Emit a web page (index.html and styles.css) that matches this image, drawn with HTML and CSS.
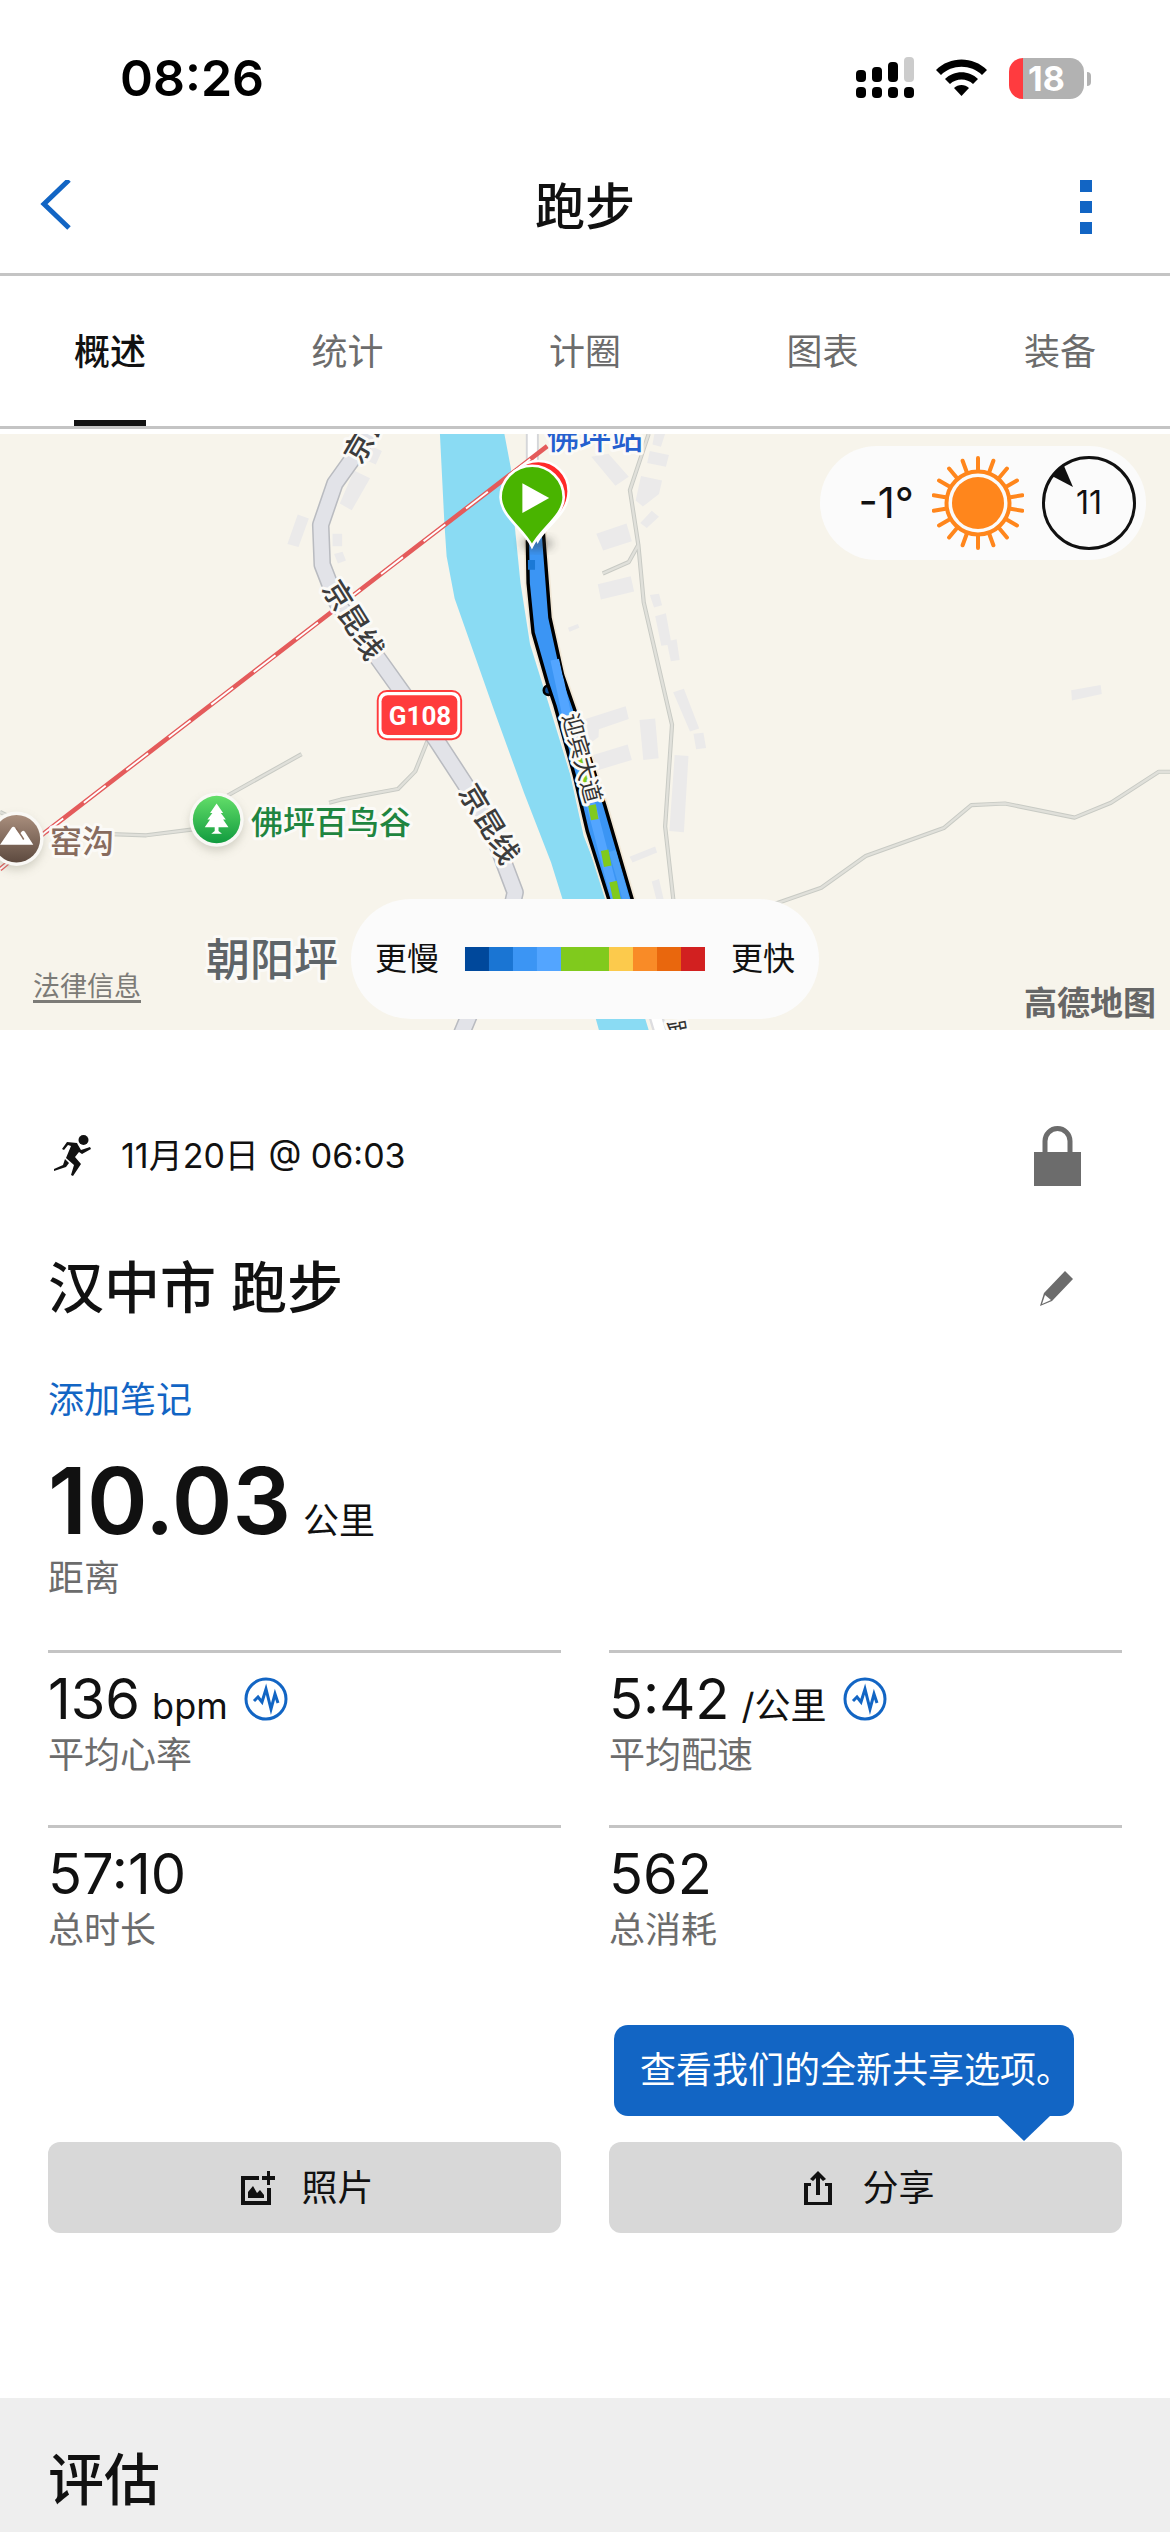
FILE: index.html
```html
<!DOCTYPE html>
<html lang="zh-CN">
<head>
<meta charset="utf-8">
<meta name="viewport" content="width=device-width, initial-scale=1">
<title>跑步</title>
<link rel="stylesheet" href="styles.css">
</head>
<body>
<div class="status">
  <time class="clock">08:26</time>
  <div class="status-icons">
    <svg width="58" height="42" viewBox="0 0 58 42" aria-label="信号">
      <rect x="0" y="13" width="10" height="12" rx="4"/><rect x="16" y="10" width="10" height="15" rx="4"/><rect x="32" y="5" width="10" height="20" rx="4"/><rect x="48" y="0" width="10" height="25" rx="4" fill="#ccc"/>
      <rect x="0" y="30" width="10" height="11" rx="4"/><rect x="16" y="30" width="10" height="11" rx="4"/><rect x="32" y="30" width="10" height="11" rx="4"/><rect x="48" y="30" width="10" height="11" rx="4"/>
    </svg>
    <svg width="51" height="42" viewBox="0 0 51 42" aria-label="无线网络">
      <path d="M0 13C14-1 37-1 51 13L46 18C35 7 16 7 5 18ZM9 22C18 13 33 13 42 22L37 27C31 21 20 21 14 27ZM18 31C22 27 29 27 33 31L25.500 39Z"/>
    </svg>
    <div class="battery"><span class="battery-level">18</span><i class="battery-nub"></i></div>
  </div>
</div>
<header class="nav">
  <button class="icon-button" aria-label="返回"><svg width="32" height="54" viewBox="0 0 32 54" fill="none" stroke="#1265c4" stroke-width="5"><path d="M29 0L4 24L29 48"/></svg></button>
  <h1 class="nav-title">跑步</h1>
  <button class="icon-button nav-more" aria-label="更多"><svg width="12" height="54" viewBox="0 0 12 54" fill="#1265c4"><path d="M0 0h12v12H0zM0 21h12v12H0zM0 42h12v12H0z"/></svg></button>
</header>
<nav class="tabs">
  <a class="tab tab-active" href="#overview">概述</a>
  <a class="tab" href="#stats">统计</a>
  <a class="tab" href="#laps">计圈</a>
  <a class="tab" href="#charts">图表</a>
  <a class="tab" href="#gear">装备</a>
</nav>
<section class="map">
  <svg class="map-canvas" viewBox="0 0 1170 596" preserveAspectRatio="xMidYMid slice">
    <defs>
      <linearGradient id="park" x1="0" y1="0" x2="0" y2="1"><stop offset="0" stop-color="#63de69"/><stop offset="1" stop-color="#119b3f"/></linearGradient>
      <linearGradient id="peak" x1="0" y1="0" x2="0" y2="1"><stop offset="0" stop-color="#a98e7d"/><stop offset="1" stop-color="#5d4a3f"/></linearGradient>
      <filter id="soft" x="-50%" y="-50%" width="200%" height="200%"><feGaussianBlur stdDeviation="12"/></filter>
      <clipPath id="route-clip"><path id="route-shape" d="M1378 290L1380 400L1393 530L1430 660L1450 720L1500 900L1535 1050L1595 1240L1656 1240L1580 980L1505 740L1470 640L1437 490L1430 400L1420 270Z"/></clipPath>
    </defs>
    <rect width="1170" height="596" fill="#f7f4eb"/>
    <g transform="translate(0 -4) scale(.3827)">
      <path fill="#8adbf3" d="M1149 0H1316L1335 100L1345 250L1360 400L1385 560L1435 720L1490 900L1525 1060L1590 1226L1695 1568H1565L1470 1226L1440 1130L1370 950L1290 730L1188 440L1167 330L1161 240Z"/>
      <g fill="#ebeaea">
        <path d="M925 106L967 126L919 210L888 192ZM778 221L807 231L780 306L751 298ZM869 271H894V304H869ZM873 324L895 318L904 341L883 349ZM970 42L998 55L982 90L958 80ZM1484 517L1510 507L1514 517L1488 527Z"/>
        <path transform="translate(1490 0)" d="M55 70L100 62L153 122L118 146ZM208 55L258 65L250 96L201 86ZM220 10H248L237 44L215 38ZM185 120L240 132L232 167L190 200L171 184ZM213 211L232 227L200 256L183 243ZM68 271L147 244L161 291L86 315ZM72 403L158 382L167 422L80 443ZM208 431L232 428L240 458L219 464ZM222 487L250 479L263 550L278 547L286 601L263 604L254 562L238 564ZM269 685L297 676L337 780L313 788ZM322 794L348 791L355 831L329 834ZM40 755L145 722L153 755L75 782L74 802L50 820ZM181 758L222 754L231 858L191 862ZM60 849L150 822L161 862L70 890ZM273 849L309 852L297 1051L259 1048ZM155 1115L222 1088L227 1104L163 1130ZM213 1180L232 1173L244 1226H225ZM1309 680L1386 666L1389 690L1311 707Z"/>
      </g>
      <path fill="none" stroke="#c8cac4" stroke-width="11" stroke-linejoin="round" d="M0 998L40 1018M290 1056L382 1059L510 1043M595 955L788 847M860 974L890 966L1040 938L1085 892L1118 810M1695 10L1646 157L1668 300L1682 450L1756 770L1738 1036L1762 1250M1668 300L1643 345L1575 375M2020 1240L2146 1196L2262 1113L2466 1040L2538 980L2626 976L2808 1013L2903 974L3028 893H3070"/>
      <path d="M0 998L40 1018M290 1056L382 1059L510 1043M595 955L788 847M860 974L890 966L1040 938L1085 892L1118 810M1695 10L1646 157L1668 300L1682 450L1756 770L1738 1036L1762 1250M1668 300L1643 345L1575 375M2020 1240L2146 1196L2262 1113L2466 1040L2538 980L2626 976L2808 1013L2903 974L3028 893H3070" fill="none" stroke="#e0e0da" stroke-width="6"/>
      <g fill="none" stroke-linejoin="round">
        <path stroke="#b9bbc0" stroke-width="46" d="M975 0L875 140L838 248L842 352L880 450L990 600L1140 810L1215 925L1290 1060L1346 1208L1330 1280L1205 1580"/>
        <path stroke="#e2e3e8" stroke-width="38" d="M975 0L875 140L838 248L842 352L880 450L990 600L1140 810L1215 925L1290 1060L1346 1208L1330 1280L1205 1580"/>
        <path stroke="#d5d6d9" stroke-width="34" d="M1391 0V110"/><path stroke="#fff" stroke-width="24" d="M1391 0V110"/>
        <path stroke="#dddde0" stroke-width="38" d="M1710 1520L1728 1580"/><path stroke="#fff" stroke-width="26" d="M1710 1520L1728 1580"/>
        <path stroke="#e45b5b" stroke-width="12" d="M0 1148L120 1050L1430 42"/>
        <path stroke="#fff" stroke-width="5" stroke-dasharray="72 68" d="M0 1148L120 1050L1430 42"/>
      </g>
      <use href="#route-shape" fill="none" stroke="#f1e7d6" stroke-width="18"/>
      <circle cx="1433" cy="680" r="12" fill="#0c4b94" stroke="#000" stroke-width="7"/>
      <use href="#route-shape" fill="#3b95f4" stroke="#000" stroke-width="9" stroke-linejoin="round"/>
      <g clip-path="url(#route-clip)" fill="none">
        <path stroke="#53a5ff" stroke-width="24" d="M1450 600L1480 740L1550 1000L1612 1240"/>
        <path stroke="#4ca1f8" stroke-width="18" d="M1600 1100L1640 1240"/>
        <path stroke="#80ca1d" stroke-width="20" d="M1515 855L1534 930M1547 980L1554 1018M1580 1098L1588 1140M1602 1180L1615 1240"/>
        <path stroke="#1b79d6" stroke-width="20" d="M1388 340V365"/>
      </g>
      <ellipse cx="1403" cy="297" rx="42" ry="14" fill="#333" opacity=".45" filter="url(#soft)"/>
      <path fill="#ff2a2a" stroke="#fff" stroke-width="7" d="M1405 290C1385 250 1328 220 1328 160A78 78 0 0 1 1486 160C1486 220 1425 250 1405 290Z"/>
      <path fill="#49b400" stroke="#fff" stroke-width="7" d="M1390 304C1370 260 1308 225 1308 176A82 82 0 0 1 1473 176C1473 225 1410 260 1390 304Z"/>
      <path fill="#fff" d="M1365 139L1435 178L1365 217Z"/>
      <circle cx="566" cy="1030" r="70" fill="#998" opacity=".4" filter="url(#soft)"/>
      <circle cx="43" cy="1080" r="70" fill="#998" opacity=".4" filter="url(#soft)"/>
      <circle cx="566" cy="1018" r="71" fill="#f9f8f5"/><circle cx="566" cy="1018" r="62" fill="url(#park)"/>
      <path fill="#fff" d="M566 976L583 1001H577L590 1018H583L597 1038H571V1048L580 1055H552L561 1048V1038H535L549 1018H542L555 1001H549Z"/>
      <circle cx="43" cy="1068" r="71" fill="#f9f8f5"/><circle cx="43" cy="1068" r="62" fill="url(#peak)"/>
      <path fill="#fff" d="M0 1084L30 1040Q35 1034 40 1040L52 1055L57 1049Q61 1045 65 1050L87 1084Z"/>
      <path fill="#fff" stroke="#8a6e5e" stroke-width="4" d="M42 1040L57 1062L62 1070"/>
      <rect x="987" y="682" width="218" height="126" rx="24" fill="#fff" stroke="#ff3b3d" stroke-width="5"/>
      <rect x="997" y="693" width="198" height="104" rx="16" fill="#ff3b3d"/>
    </g>
    <g class="map-text" text-anchor="middle">
      <text class="road" transform="translate(364 9) rotate(-60)" x="8" y="8">京昆</text>
      <text class="road" transform="translate(353 186) rotate(58)" y="10">京昆线</text>
      <text class="road" transform="translate(489 390) rotate(59)" y="10">京昆线</text>
      <text class="street" transform="translate(582 324) rotate(75)" y="8">迎宾大道</text>
      <text class="street" transform="translate(677 598) rotate(80)" y="8">路</text>
      <text class="shield" x="420" y="291">G108</text>
      <text class="poi station" x="595" y="15">佛坪站</text>
      <text class="poi park" x="331" y="400">佛坪百鸟谷</text>
      <text class="poi valley" x="82" y="419">窑沟</text>
      <text class="area" x="272" y="542">朝阳坪</text>
    </g>
  </svg>
  <div class="weather">
    <span class="temperature">-1°</span>
    <svg width="92" height="94" viewBox="-46 -47 92 94" aria-label="晴">
      <circle r="26" fill="#ff861c"/><circle r="31.500" fill="none" stroke="#ff861c" stroke-width="4"/>
      <g stroke="#ff861c" stroke-width="4" stroke-linecap="round">
        <path id="ray" d="M0-33V-45M0 33V45"/>
        <use href="#ray" transform="rotate(20)"/><use href="#ray" transform="rotate(40)"/><use href="#ray" transform="rotate(60)"/><use href="#ray" transform="rotate(80)"/><use href="#ray" transform="rotate(100)"/><use href="#ray" transform="rotate(120)"/><use href="#ray" transform="rotate(140)"/><use href="#ray" transform="rotate(160)"/>
      </g>
    </svg>
    <div class="wind">
      <svg width="94" height="94" viewBox="-47 -47 94 94"><circle r="45.500" fill="none" stroke="#111" stroke-width="3"/><path d="M-37-27L-25-37L-16-16Z" fill="#111"/></svg>
      <span>11</span>
    </div>
  </div>
  <div class="legend">
    <span>更慢</span>
    <div class="scale"><i class="c1"></i><i class="c2"></i><i class="c3"></i><i class="c4"></i><i class="c5"></i><i class="c5"></i><i class="c6"></i><i class="c7"></i><i class="c8"></i><i class="c9"></i></div>
    <span>更快</span>
  </div>
  <a class="legal" href="#legal">法律信息</a>
  <span class="provider">高德地图</span>
</section>
<main class="activity">
  <div class="row date-row">
    <svg width="40" height="42" viewBox="0 0 40 42" fill="#111" aria-label="跑步">
      <circle cx="30.500" cy="5" r="5"/>
      <path d="M9 14L14 7L24 8L25 10L28 15L37 12L38 14L29 19L26 17L22 22L28 29L20 41L18 40L21 30L13 23L18 11L15 10L11 15ZM12 24L16 28L13 32L1 36L1 34L10 30Z"/>
    </svg>
    <span class="date">11月20日 @ 06:03</span>
    <svg class="trailing" width="48" height="60" viewBox="0 0 48 60" aria-label="仅自己可见"><path fill="#6c6c6c" d="M1 26H48V60H1Z"/><path d="M12 27V15A12.500 12.500 0 0 1 37 15V27" fill="none" stroke="#6c6c6c" stroke-width="5"/></svg>
  </div>
  <div class="row title-row">
    <h2 class="heading">汉中市 跑步</h2>
    <button class="icon-button trailing" aria-label="编辑"><svg width="34" height="35" viewBox="0 0 34 35" fill="#6c6c6c"><path fill-rule="evenodd" d="M25 0L33 8L12 30L0 35L4 22ZM5 24L2 33L11 29Z"/></svg></button>
  </div>
  <a class="note" href="#note">添加笔记</a>
  <div class="distance">
    <div class="distance-value"><strong>10.03</strong><span class="unit">公里</span></div>
    <div class="label">距离</div>
  </div>
  <div class="metrics">
    <div class="metric">
      <div class="value">136<span class="unit">bpm</span><svg class="pulse" width="44" height="44" viewBox="0 0 44 44" fill="none" stroke="#1265c4"><circle cx="22" cy="22" r="20" stroke-width="3"/><path stroke-width="3" d="M10 24L14 20L18 25L22 12L27 32L31 17L34 26"/></svg></div>
      <div class="label">平均心率</div>
    </div>
    <div class="metric">
      <div class="value">5:42<span class="unit">/公里</span><svg class="pulse" width="44" height="44" viewBox="0 0 44 44" fill="none" stroke="#1265c4"><circle cx="22" cy="22" r="20" stroke-width="3"/><path stroke-width="3" d="M10 24L14 20L18 25L22 12L27 32L31 17L34 26"/></svg></div>
      <div class="label">平均配速</div>
    </div>
    <div class="metric"><div class="value">57:10</div><div class="label">总时长</div></div>
    <div class="metric"><div class="value">562</div><div class="label">总消耗</div></div>
  </div>
  <div class="actions">
    <button class="action">
      <svg width="34" height="34" viewBox="0 0 34 34" fill="#111"><path d="M0 5H18V9H4V30H26V17H30V34H0ZM26 0H29V5H34V9H29V14H26V9H21V5H26ZM7 27V21L12 15L16 22L19 19L23 24V27Z"/></svg>
      照片
    </button>
    <div class="share">
      <button class="action">
        <svg width="34" height="34" viewBox="0 0 34 34" fill="#111"><path d="M2 12H9V15H6V31H26V15H23V12H30V34H2ZM16 0L24 8L21 10L18 7V24H14V7L11 10L8 8Z"/></svg>
        分享
      </button>
      <div class="tooltip" role="tooltip">查看我们的全新共享选项。</div>
    </div>
  </div>
</main>
<section class="review"><h2 class="heading">评估</h2></section>
</body>
</html>
```
FILE: styles.css
```css
* { box-sizing: border-box; }
body {
  display: flex;
  flex-direction: column;
  min-height: 100vh;
  margin: 0;
  background: #fff;
  color: #111;
  font-family: Inter, "Noto Sans CJK SC", sans-serif;
  font-size: 36px;
  line-height: 48px;
}
h1, h2 { margin: 0; }
a { color: inherit; text-decoration: none; }
button { font: inherit; color: inherit; border: 0; background: none; padding: 0; }
svg { display: block; flex: none; }
.icon-button { display: flex; }

.status {
  display: flex;
  justify-content: space-between;
  align-items: center;
  height: 156px;
  padding: 0 78px 0 120px;
  color: #000;
}
.clock { font-size: 50px; font-weight: 600; }
.status-icons { display: flex; align-items: center; gap: 22px; }
.battery {
  position: relative;
  width: 75px;
  height: 41px;
  margin-right: 8px;
  border-radius: 14px;
  background: linear-gradient(90deg, #ff3b3f 14px, #b2b2b2 14px);
  color: #fff;
  text-align: center;
}
.battery-level { display: block; font-size: 34px; font-weight: 700; line-height: 41px; }
.battery-nub {
  position: absolute;
  left: 78px;
  top: 14px;
  width: 4px;
  height: 14px;
  border-radius: 0 4px 4px 0;
  background: #b2b2b2;
}

.nav {
  display: grid;
  grid-template-columns: 1fr auto 1fr;
  align-items: center;
  height: 120px;
  padding: 0 40px 16px;
  border-bottom: 3px solid #c4c4c4;
}
.nav-title { font-size: 50px; font-weight: 500; line-height: 72px; }
.nav-more { justify-self: end; margin-right: 38px; }

.tabs {
  display: flex;
  justify-content: space-between;
  padding: 0 74px;
  border-bottom: 3px solid #c4c4c4;
  color: #6c6c6c;
}
.tab { padding: 52px 0 44px; border-bottom: 6px solid transparent; }
.tab-active { color: #111; font-weight: 500; border-color: #111; }

.map { position: relative; margin-top: 5px; }
.map-canvas { width: 100%; height: 596px; }
.map-text { font-family: "Noto Sans CJK SC", sans-serif; }
.map-text text { paint-order: stroke; stroke: #fbfaf7; stroke-width: 6px; stroke-linejoin: round; }
.map-text .road { font-size: 29px; font-weight: 500; fill: #3c3c3c; }
.map-text .street { font-size: 23px; fill: #333; }
.map-text .poi { font-size: 32px; font-weight: 500; }
.map-text .station { fill: #2460cf; }
.map-text .park { fill: #1f8540; }
.map-text .valley { fill: #886c5e; }
.map-text .area { font-size: 44px; font-weight: 500; fill: #5e6468; }
.map-text .shield {
  font-family: Roboto, sans-serif;
  font-size: 26px;
  font-weight: 700;
  fill: #fff;
  stroke: none;
}
.weather {
  position: absolute;
  top: 12px;
  right: 24px;
  display: flex;
  align-items: center;
  height: 114px;
  padding: 0 10px 0 38px;
  gap: 18px;
  border-radius: 57px;
  background: #fbfbfb;
}
.temperature { font-size: 42px; }
.wind { display: grid; place-items: center; font-size: 32px; }
.wind > * { grid-area: 1 / 1; }
.legend {
  position: absolute;
  left: 50%;
  bottom: 11px;
  transform: translateX(-50%);
  display: flex;
  align-items: center;
  gap: 26px;
  height: 120px;
  padding: 0 24px;
  border-radius: 60px;
  background: #fbfbfb;
  font-size: 32px;
  white-space: nowrap;
}
.scale { display: flex; }
.scale i { width: 24px; height: 24px; }
.c1 { background: #00489b; }
.c2 { background: #1a75d3; }
.c3 { background: #3b95f4; }
.c4 { background: #53a5ff; }
.c5 { background: #80ca1d; }
.c6 { background: #fcca4c; }
.c7 { background: #f98b27; }
.c8 { background: #e9670d; }
.c9 { background: #d22020; }
.legal {
  position: absolute;
  left: 33px;
  bottom: 19px;
  color: #7c7b77;
  font-size: 27px;
  text-decoration: underline;
  text-decoration-thickness: 3px;
  text-underline-offset: 4px;
}
.provider {
  position: absolute;
  right: 14px;
  bottom: 3px;
  color: #666;
  font-size: 33px;
  font-weight: 700;
}

.activity { padding: 96px 48px 165px; }
.row { display: flex; align-items: center; }
.trailing { margin-left: auto; }
.date-row { height: 60px; padding: 0 41px 0 5px; gap: 28px; }
.date { font-size: 34px; }
.title-row { height: 80px; margin-top: 62px; padding-right: 48px; }
.heading { font-size: 56px; font-weight: 500; line-height: 80px; }
.note { display: block; margin-top: 48px; color: #1265c4; }
.distance { margin-top: 24px; }
.distance-value { display: flex; align-items: baseline; height: 106px; line-height: 106px; }
.distance-value strong { font-size: 92px; font-weight: 600; }
.unit { margin-left: 12px; font-size: 36px; line-height: 48px; }
.label { color: #6c6c6c; }
.metrics { display: grid; grid-template-columns: 1fr 1fr; column-gap: 48px; margin-top: 48px; }
.metric { height: 175px; padding-top: 14px; border-top: 3px solid #c4c4c4; }
.value { display: flex; align-items: baseline; height: 64px; font-size: 56px; line-height: 64px; }
.pulse { align-self: center; margin-left: 16px; }
.actions { display: grid; grid-template-columns: 1fr 1fr; gap: 48px; margin-top: 142px; }
.action {
  display: flex;
  align-items: center;
  justify-content: center;
  gap: 26px;
  width: 100%;
  height: 91px;
  padding-left: 6px;
  border-radius: 12px;
  background: #d8d8d8;
}
.share { position: relative; }
.tooltip {
  position: absolute;
  right: 48px;
  bottom: 117px;
  height: 91px;
  padding: 0 2px 0 26px;
  border-radius: 14px;
  background: #1265c4;
  color: #fff;
  line-height: 91px;
  white-space: nowrap;
}
.tooltip::after {
  content: "";
  position: absolute;
  right: 24px;
  top: 100%;
  border: solid transparent;
  border-width: 25px 26px 0;
  border-top-color: #1265c4;
}
.review { flex: 1; padding: 42px 48px 8px; background: #eee; }
```
